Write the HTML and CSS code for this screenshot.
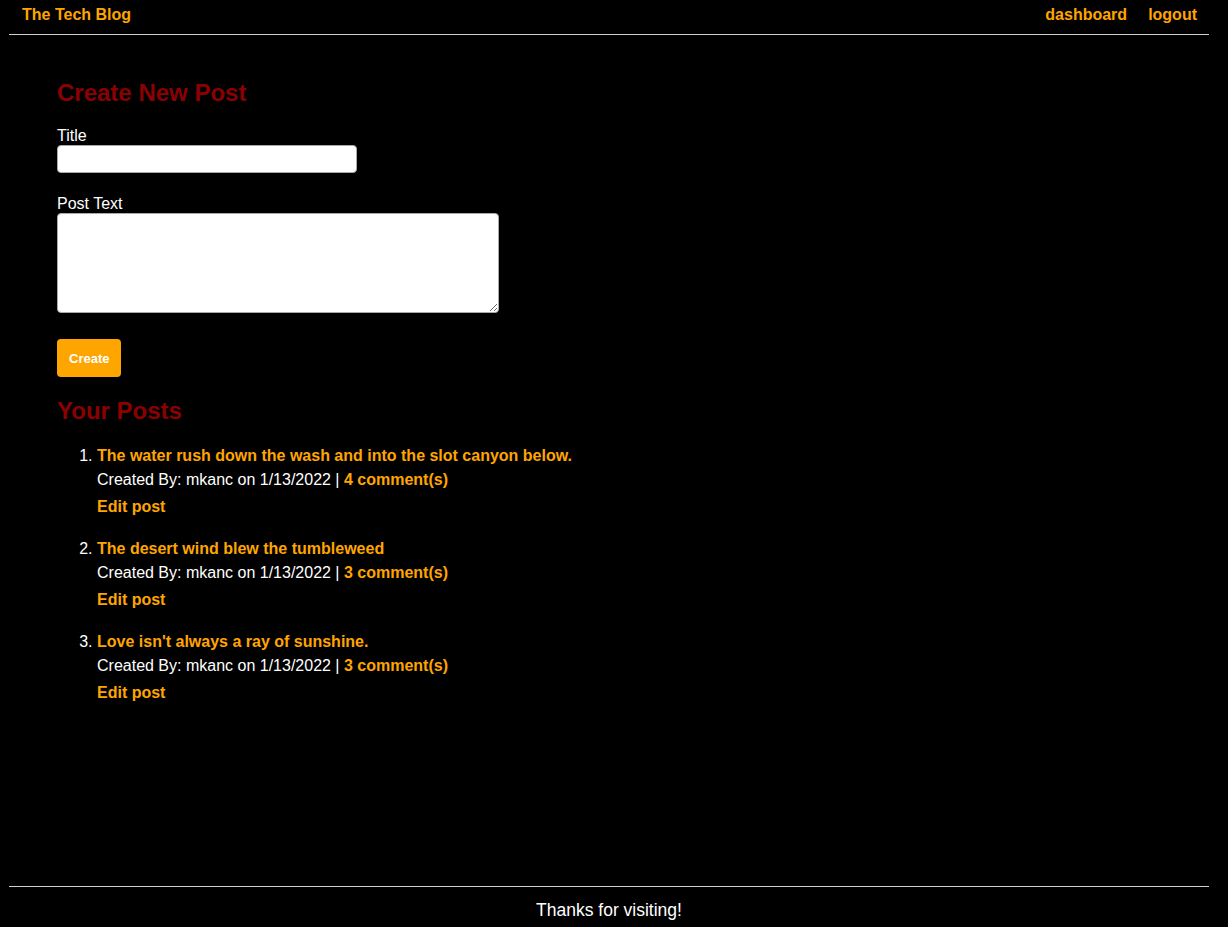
FILE: index.html
```html
<!DOCTYPE html>
<html lang="en">
<head>
<meta charset="utf-8">
<title>The Tech Blog</title>
<link rel="stylesheet" href="styles.css">
</head>
<body>
<div class="site">
  <header class="topbar">
    <a class="brand" href="#">The Tech Blog</a>
    <nav class="nav">
      <a href="#">dashboard</a>
      <a href="#">logout</a>
    </nav>
  </header>
  <main class="main">
    <h2 class="heading">Create New Post</h2>
    <form class="post-form">
      <label class="field-label" for="title">Title</label>
      <input class="title-input" id="title" type="text">
      <label class="field-label field-label--gap" for="body">Post Text</label>
      <textarea class="body-input" id="body"></textarea>
      <button class="create-btn" type="button">Create</button>
    </form>
    <h2 class="heading heading--posts">Your Posts</h2>
    <ol class="post-list">
      <li class="post-item">
        <div class="post-title"><a href="#">The water rush down the wash and into the slot canyon below.</a></div>
        <div class="post-meta">Created By: mkanc on 1/13/2022 | <a href="#">4 comment(s)</a></div>
        <div class="post-edit"><a href="#">Edit post</a></div>
      </li>
      <li class="post-item">
        <div class="post-title"><a href="#">The desert wind blew the tumbleweed</a></div>
        <div class="post-meta">Created By: mkanc on 1/13/2022 | <a href="#">3 comment(s)</a></div>
        <div class="post-edit"><a href="#">Edit post</a></div>
      </li>
      <li class="post-item">
        <div class="post-title"><a href="#">Love isn't always a ray of sunshine.</a></div>
        <div class="post-meta">Created By: mkanc on 1/13/2022 | <a href="#">3 comment(s)</a></div>
        <div class="post-edit"><a href="#">Edit post</a></div>
      </li>
    </ol>
  </main>
  <footer class="footer">Thanks for visiting!</footer>
</div>
</body>
</html>
```

FILE: styles.css
```css
html, body {
  margin: 0;
  padding: 0;
  background: #000;
}

body {
  font-family: "Liberation Sans", Arial, sans-serif;
  color: #fff;
  font-size: 16px;
}

a {
  color: #ffa500;
  text-decoration: none;
  font-weight: bold;
}

.site {
  width: 1200px;
  margin: 0 0 0 9px;
  min-height: 100vh;
  display: flex;
  flex-direction: column;
}

.topbar {
  height: 35px;
  box-sizing: border-box;
  border-bottom: 1px solid #d0d0d0;
  display: flex;
  justify-content: space-between;
  align-items: flex-start;
  padding: 6px 12px 0 13px;
}

.nav {
  display: flex;
  gap: 21px;
}

.main {
  flex: 1;
  padding: 44px 0 0 48px;
}

.heading {
  margin: 0;
  font-size: 24px;
  line-height: 28px;
  color: #8b0000;
}

.post-form {
  display: flex;
  flex-direction: column;
  align-items: flex-start;
}

.field-label {
  margin-top: 20px;
  line-height: 17px;
}

.field-label--gap {
  margin-top: 22px;
}

.title-input {
  width: 300px;
  height: 28px;
  box-sizing: border-box;
  border: 1px solid #aaa;
  border-radius: 4px;
  background: #fff;
  margin: 1px 0 0;
}

.body-input {
  width: 442px;
  height: 100px;
  box-sizing: border-box;
  border: 1px solid #aaa;
  border-radius: 4px;
  background: #fff;
  margin: 1px 0 0;
  font-family: inherit;
}

.create-btn {
  margin-top: 26px;
  height: 38px;
  padding: 0 12px;
  border: none;
  border-radius: 4px;
  background: #ffa500;
  color: #fff;
  font-family: inherit;
  font-weight: bold;
  font-size: 13px;
}

.heading--posts {
  margin-top: 20px;
}

.post-list {
  margin: 19px 0 0;
  padding-left: 40px;
}

.post-item {
  margin-bottom: 18px;
}

.post-title,
.post-meta,
.post-edit {
  line-height: 24px;
}

.post-edit {
  margin-top: 3px;
}

.footer {
  border-top: 1px solid #d0d0d0;
  text-align: center;
  font-size: 17.5px;
  padding: 13px 0 6px;
}
```
